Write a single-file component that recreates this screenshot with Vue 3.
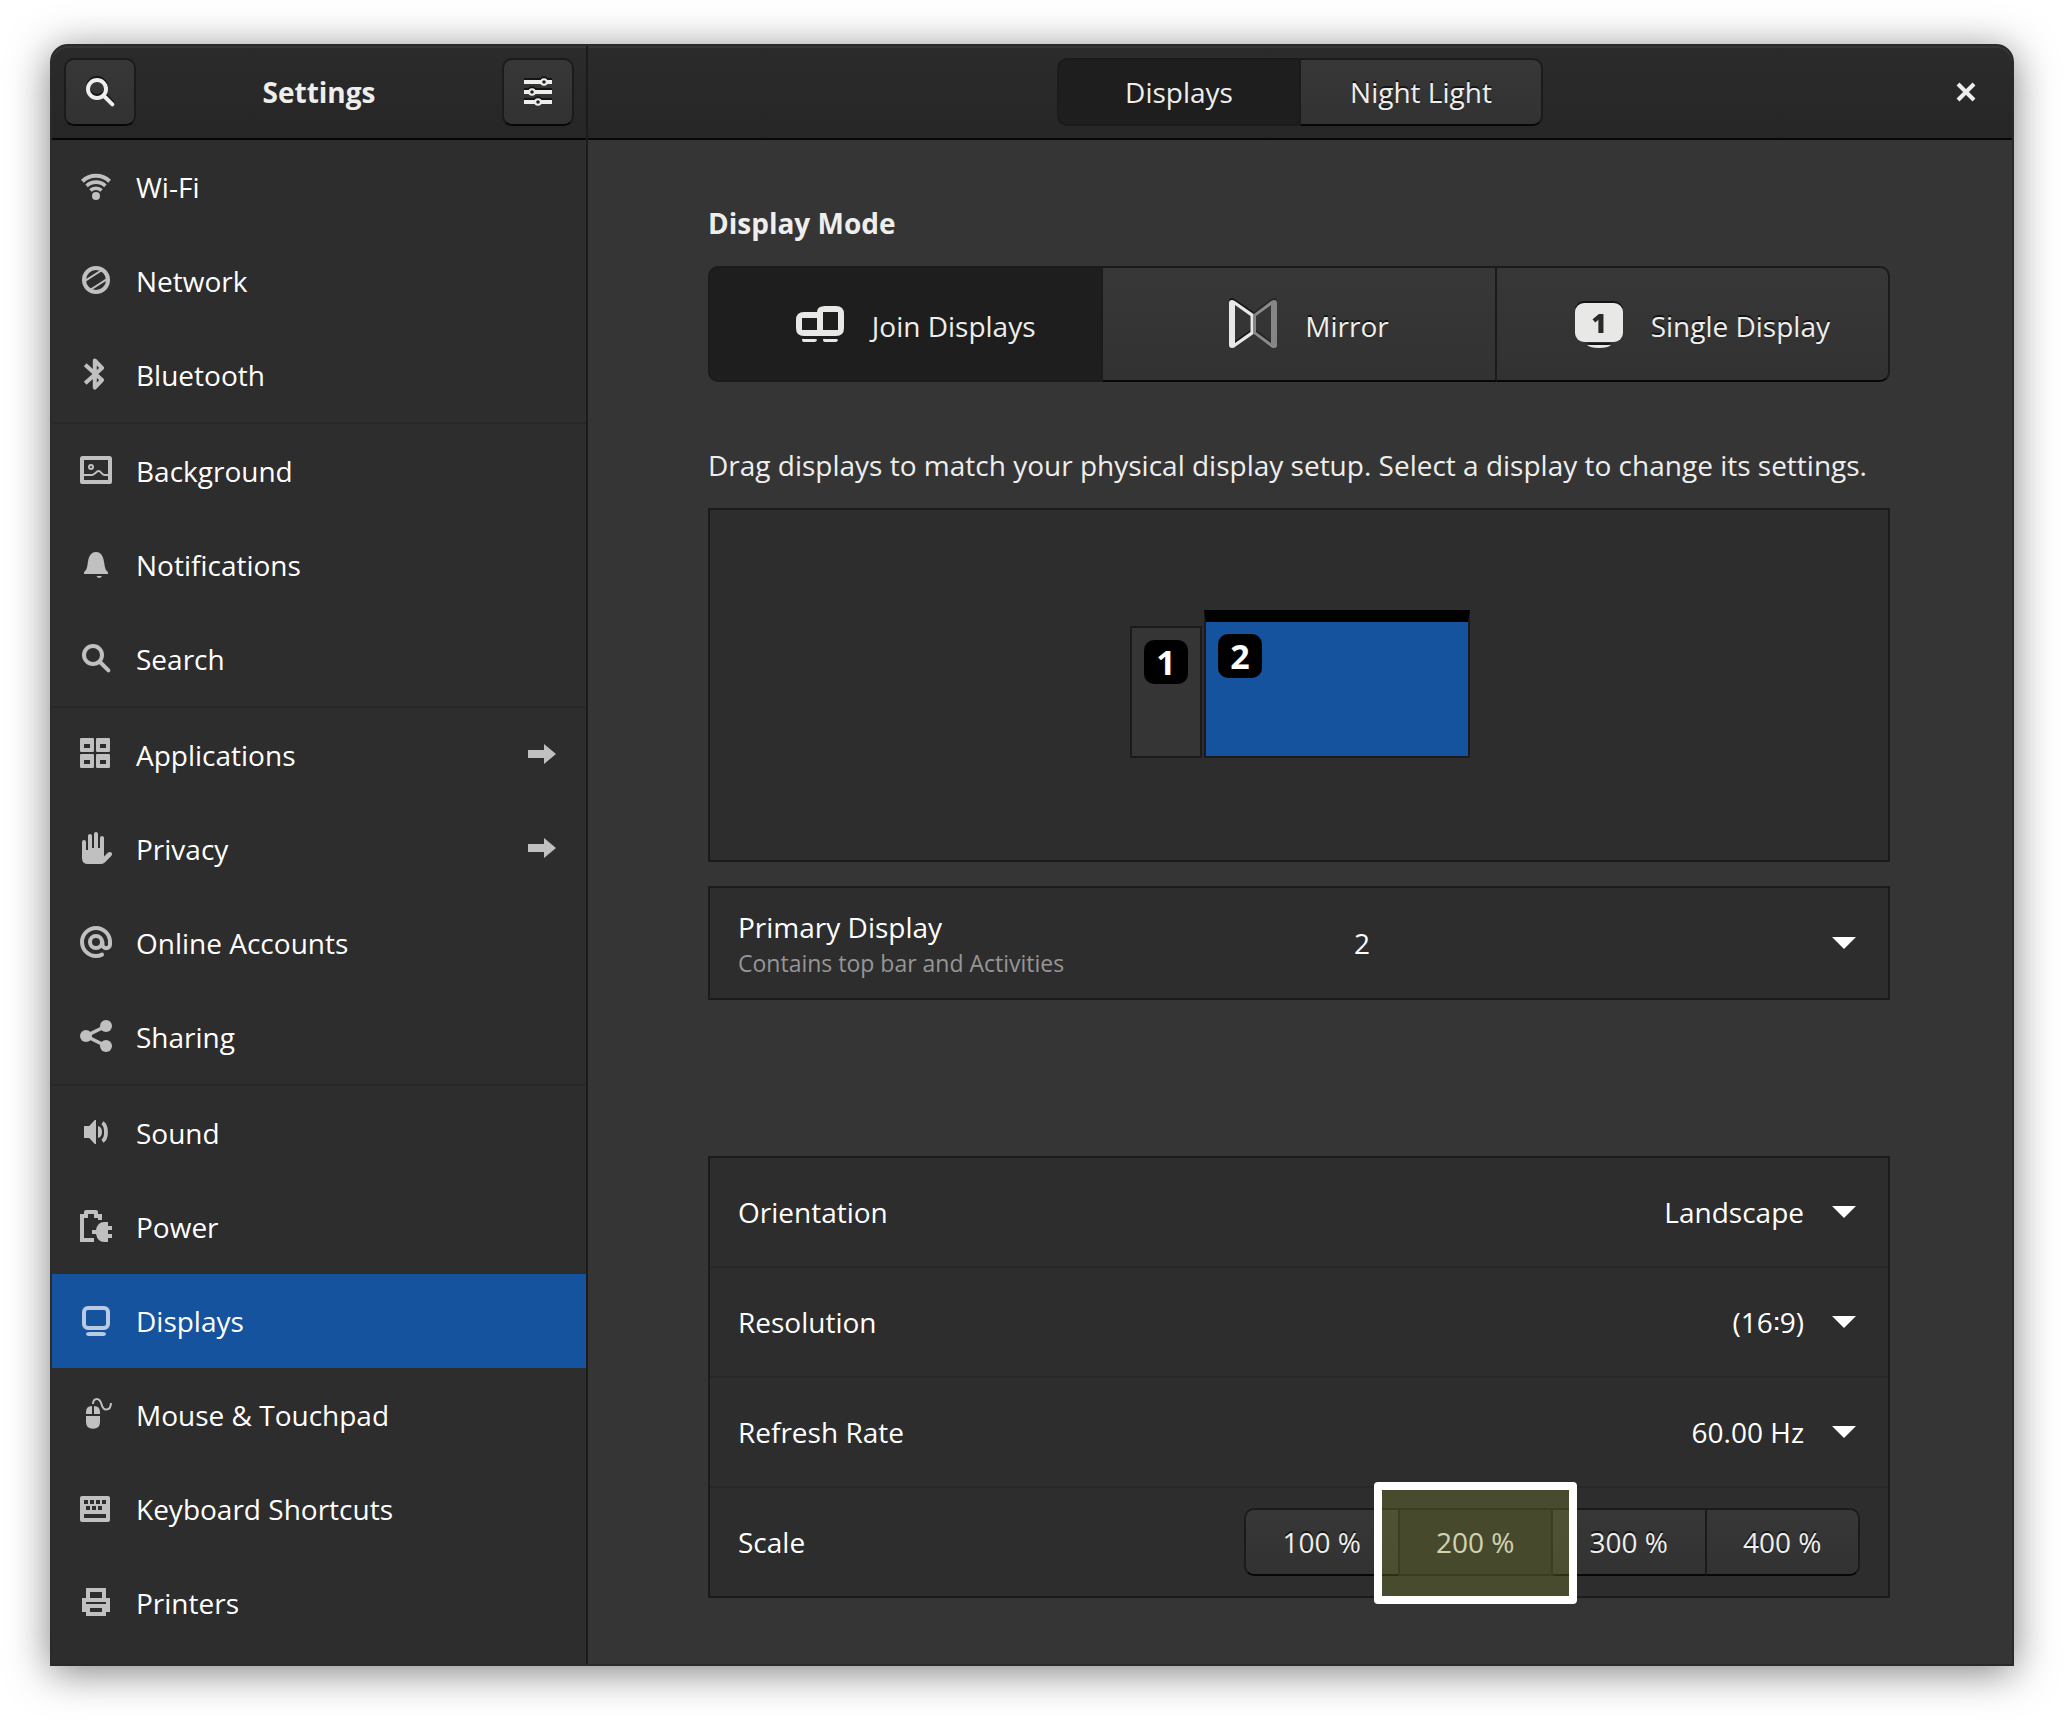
<script setup>
import { ref } from 'vue'

const groups = [
  [
    { id: 'wifi', label: 'Wi-Fi' },
    { id: 'network', label: 'Network' },
    { id: 'bluetooth', label: 'Bluetooth' },
  ],
  [
    { id: 'background', label: 'Background' },
    { id: 'notifications', label: 'Notifications' },
    { id: 'search', label: 'Search' },
  ],
  [
    { id: 'applications', label: 'Applications', sub: true },
    { id: 'privacy', label: 'Privacy', sub: true },
    { id: 'online', label: 'Online Accounts' },
    { id: 'sharing', label: 'Sharing' },
  ],
  [
    { id: 'sound', label: 'Sound' },
    { id: 'power', label: 'Power' },
    { id: 'displays', label: 'Displays' },
    { id: 'mouse', label: 'Mouse & Touchpad' },
    { id: 'keyboard', label: 'Keyboard Shortcuts' },
    { id: 'printers', label: 'Printers' },
  ],
]

const icons = {
  wifi: '<g fill="none" stroke="currentColor"><path stroke-width="2" d="M1.2 5.6A10 10 0 0 1 14.8 5.6"/><path stroke-width="1.8" d="M3.3 7.9A7 7 0 0 1 12.7 7.9"/><path stroke-width="1.8" d="M5.2 10.2A4.2 4.2 0 0 1 10.8 10.2"/></g><circle cx="8" cy="13" r="2"/>',
  network: '<g fill="none" stroke="currentColor"><circle cx="8" cy="8" r="6" stroke-width="2"/><path d="M2.5 8.4L11 3M5 13L13.5 7.6"/></g>',
  bluetooth: '<path fill="none" stroke="currentColor" stroke-width="2" stroke-linejoin="round" d="M2.600 3.400L11 11L7.400 14.800V1.200L11 5L2.600 12.600"/>',
  background: '<rect x="1" y="2" width="14" height="12" rx=".3" fill="none" stroke="currentColor" stroke-width="2"/><g fill="none" stroke="currentColor"><circle cx="5.5" cy="6.5" r="1"/><path d="M2 10.5H6C7.5 10.5 8 8.5 9.3 8.5S10.8 10.5 12.5 10.5H14"/></g>',
  notifications: '<path d="M8 2C5 2 4.2 5 3.8 8C3.5 10.4 3 11.3 2 12V13H14V12C13 11.3 12.5 10.4 12.2 8C11.8 5 11 2 8 2ZM8.2 14H11Q10.4 15 9.6 15T8.2 14Z"/>',
  search: '<circle cx="6.5" cy="6.5" r="4.5" fill="none" stroke="currentColor" stroke-width="2"/><path d="M10 10L14.2 14.2" stroke="currentColor" stroke-width="2" stroke-linecap="round"/>',
  applications: '<path fill-rule="evenodd" d="M.6 0H6.4Q7 0 7 .6V6.4Q7 7 6.4 7H.6Q0 7 0 6.4V.6Q0 0 .6 0ZM2 3V5H5V3ZM8.6 0H14.4Q15 0 15 .6V6.4Q15 7 14.4 7H8.6Q8 7 8 6.4V.6Q8 0 8.6 0ZM10 3V5H13V3ZM.6 8H6.4Q7 8 7 8.6V14.4Q7 15 6.4 15H.6Q0 15 0 14.4V8.6Q0 8 .6 8ZM2 11V13H5V11ZM8.6 8H14.4Q15 8 15 8.6V14.4Q15 15 14.4 15H8.6Q8 15 8 14.4V8.6Q8 8 8.6 8ZM10 11V13H13V11Z"/>',
  privacy: '<path d="M1 5Q1 4 2 4T3 5V9H4V2Q4 1 5 1T6 2V8H7V1Q7 0 8 0T9 1V8H10V3Q10 2 11 2T12 3V12.2L14 10.3Q15 9.6 15.7 10.3T15.6 12L12.4 15.2Q11.4 16 10.4 16H4Q1 16 1 13Z"/>',
  online: '<g fill="none" stroke="currentColor" stroke-width="2"><circle cx="8" cy="8" r="3"/><path stroke-linecap="round" d="M11 14.3Q9.6 15 8 15A7 7 0 1 1 15 8V9.2A1.9 1.9 0 0 1 11.2 9.2V8"/></g>',
  sharing: '<circle cx="13" cy="3" r="3"/><circle cx="3" cy="8" r="3"/><circle cx="13" cy="13" r="3"/><path d="M13 3L3 8L13 13" fill="none" stroke="currentColor" stroke-width="1.8"/>',
  sound: '<path d="M2 5H4.6L7.4 2H8V14H7.4L4.6 11H2ZM9 5Q11 5.5 11 8T9 11Z"/><path d="M11.2 3.4Q13 4.5 13 8T11.2 12.6" fill="none" stroke="currentColor" stroke-width="1.9"/>',
  power: '<path d="M0 2H2V1Q2 0 3 0H8Q9 0 9 1V2H11V5H9V4H7V2H4V4H2V14H7V16H0ZM6 10H8Q8.8 6 12 6H14V8H16V10H14V12H16V14H14V16H12Q8.8 16 8 12H6Z"/>',
  displays: '<rect x="2" y="2" width="12" height="10" rx="2" fill="none" stroke="currentColor" stroke-width="2"/><path d="M5 14H11Q13 14 13 15T11 16H5Q3 16 3 15T5 14Z"/>',
  mouse: '<path d="M3 8V7Q3 4 6 4V8ZM7 4Q10 4 10 7V8H7ZM3 9H10V12Q10 15.4 6.5 15.4T3 12Z"/><path d="M6.5 3Q6.5 .5 8.5 .5C11.5 .5 10 5.8 13 5.8Q15.4 5.8 15.5 2.5" fill="none" stroke="currentColor"/>',
  keyboard: '<path fill-rule="evenodd" d="M1 2H14Q15 2 15 3V14Q15 15 14 15H1Q0 15 0 14V3Q0 2 1 2ZM2 4V6H4V4ZM5 4V6H7V4ZM8 4V6H10V4ZM11 4V6H13V4ZM3 7V9H5V7ZM6 7V9H8V7ZM9 7V9H11V7ZM2 11V13H13V11Z"/>',
  printers: '<path fill-rule="evenodd" d="M3 1H13V6H15V13H13V15H3V13H1V6H3ZM5 3V6H11V3ZM3 8V9H13V8ZM5 11V13H11V11Z"/>',
}

const active = ref('displays')
const tabs = ['Displays', 'Night Light']
const tab = ref('Displays')
const mode = ref('join')

const primary = ref('2')
const settings = ref([
  { id: 'orientation', label: 'Orientation', value: 'Landscape' },
  { id: 'resolution', label: 'Resolution', value: '(16∶9)' },
  { id: 'refresh', label: 'Refresh Rate', value: '60.00 Hz' },
])

const scales = ['100 %', '200 %', '300 %', '400 %']
const scale = ref('200 %')
</script>

<template>
  <div class="desktop">
    <div class="window">
      <aside class="side">
        <header class="bar side-bar">
          <button class="btn icon-btn" aria-label="Search">
            <svg class="icon" viewBox="0 0 16 16" v-html="icons.search"></svg>
          </button>
          <h1 class="heading">Settings</h1>
          <button class="btn icon-btn" aria-label="Menu">
            <svg class="icon" viewBox="0 0 16 16">
              <path d="M1 2H15V4H1ZM1 7H15V9H1ZM1 12H15V14H1Z" />
              <g class="knob">
                <circle cx="11" cy="3" r="1.4" />
                <circle cx="5" cy="8" r="1.4" />
                <circle cx="8" cy="13" r="1.4" />
              </g>
            </svg>
          </button>
        </header>
        <nav class="nav">
          <ul v-for="(group, i) in groups" :key="i" class="group">
            <li v-for="item in group" :key="item.id">
              <a
                href="#"
                class="item"
                :class="{ selected: item.id === active }"
                @click.prevent="active = item.id"
              >
                <svg class="icon" viewBox="0 0 16 16" v-html="icons[item.id]"></svg>
                <span class="item-label">{{ item.label }}</span>
                <svg v-if="item.sub" class="arrow" viewBox="0 0 28 20">
                  <path d="M0 6H16V0L28 10L16 20V14H0Z" />
                </svg>
              </a>
            </li>
          </ul>
        </nav>
      </aside>

      <main class="main">
        <header class="bar main-bar">
          <div class="linked tabs">
            <button
              v-for="t in tabs"
              :key="t"
              class="btn"
              :class="{ checked: t === tab }"
              :aria-pressed="t === tab"
              @click="tab = t"
            >{{ t }}</button>
          </div>
          <button class="close" aria-label="Close">
            <svg viewBox="0 0 20 20"><path d="M2 2L18 18M18 2L2 18" /></svg>
          </button>
        </header>

        <div class="content">
          <h2 class="heading mode-title">Display Mode</h2>
          <div class="linked modes">
            <button class="btn" :class="{ checked: mode === 'join' }" @click="mode = 'join'">
              <svg class="mode-icon" viewBox="0 0 48 48">
                <path fill-rule="evenodd" d="M8 12H21Q21 6 29 6H40Q48 6 48 14V28Q48 36 40 36H8Q0 36 0 28V20Q0 12 8 12ZM6 18V30H21V18ZM27 12V30H42V12Z" />
                <path d="M8 39H19Q21 39 21 40T19 42H8Q6 42 6 40T8 39ZM29 39H40Q42 39 42 40T40 42H29Q27 42 27 40T29 39Z" />
              </svg>
              <span>Join Displays</span>
            </button>
            <button class="btn" :class="{ checked: mode === 'mirror' }" @click="mode = 'mirror'">
              <svg class="mode-icon" viewBox="0 0 48 48">
                <path fill-rule="evenodd" opacity=".5" d="M48 3V45Q48 48 45 48Q43 48 41.500 46.500L25 34V14L41.500 1.500Q43 0 45 0Q48 0 48 3ZM42 5L27 16V32L42 43Z" />
                <path fill-rule="evenodd" d="M0 3V45Q0 48 3 48Q5 48 6.500 46.500L24.500 34V14L6.500 1.500Q5 0 3 0Q0 0 0 3ZM6 5L21.500 16V32L6 43Z" />
              </svg>
              <span>Mirror</span>
            </button>
            <button class="btn" :class="{ checked: mode === 'single' }" @click="mode = 'single'">
              <svg class="mode-icon" viewBox="0 0 48 48">
                <rect x="0" y="3" width="48" height="39" rx="9" />
                <path d="M12 45H36Q33 48 24 48T12 45Z" />
                <text class="digit" x="24" y="33" text-anchor="middle">1</text>
              </svg>
              <span>Single Display</span>
            </button>
          </div>

          <p class="hint">Drag displays to match your physical display setup. Select a display to change its settings.</p>

          <div class="arrangement">
            <div class="screen first"><span class="badge">1</span></div>
            <div class="screen second"><span class="badge">2</span></div>
          </div>

          <div class="card primary">
            <label for="primary" class="label">
              <span>Primary Display</span>
              <small>Contains top bar and Activities</small>
            </label>
            <div class="combo wide">
              <select id="primary" v-model="primary">
                <option>1</option>
                <option>2</option>
              </select>
              <svg class="caret" viewBox="0 0 24 12"><path d="M0 0H24L12 12Z" /></svg>
            </div>
          </div>

          <div class="card list">
            <div v-for="s in settings" :key="s.id" class="row">
              <label :for="s.id" class="label">{{ s.label }}</label>
              <div class="combo">
                <select :id="s.id" v-model="s.value">
                  <option>{{ s.value }}</option>
                </select>
                <svg class="caret" viewBox="0 0 24 12"><path d="M0 0H24L12 12Z" /></svg>
              </div>
            </div>
            <div class="row">
              <span id="scale-label" class="label">Scale</span>
              <div class="linked scales" role="group" aria-labelledby="scale-label">
                <button
                  v-for="s in scales"
                  :key="s"
                  class="btn"
                  :class="{ checked: s === scale }"
                  :aria-pressed="s === scale"
                  @click="scale = s"
                >
                  {{ s }}
                  <span v-if="s === scale" class="marker"></span>
                </button>
              </div>
            </div>
          </div>
        </div>
      </main>
    </div>
  </div>
</template>

<style>
body {
  margin: 0;
  background: #fff;
}
</style>

<style scoped>
.desktop {
  padding: 44px 50px 56px;
  font: 28px/38px "Open Sans", "Noto Sans", sans-serif;
  color: #eeeeec;
}
.desktop *,
.desktop *::before {
  box-sizing: border-box;
}
.window {
  display: flex;
  border: 2px solid #2a2a2a;
  border-radius: 18px 18px 0 0;
  background: #353535;
  box-shadow: 0 6px 40px rgba(0, 0, 0, 0.5);
}
.side {
  flex: none;
  width: 536px;
  border-right: 2px solid #1b1b1b;
  border-radius: 16px 0 0 0;
  background: #2d2d2d;
}
.main {
  flex: 1;
  min-width: 0;
}
.bar {
  height: 94px;
  padding: 0 12px;
  border-bottom: 2px solid #070707;
  background: linear-gradient(#2b2b2b, #262626);
  box-shadow: inset 0 2px #363636;
}
.side-bar {
  display: flex;
  align-items: center;
  justify-content: space-between;
  border-radius: 16px 0 0 0;
}
.main-bar {
  display: grid;
  grid-template-columns: 1fr auto 1fr;
  align-items: center;
  border-radius: 0 16px 0 0;
}
.heading {
  margin: 0;
  font-size: 28px;
  line-height: 38px;
  font-weight: 700;
}
.btn {
  height: 68px;
  padding: 0;
  border: 2px solid #1b1b1b;
  border-bottom-color: #070707;
  background: linear-gradient(#373737, #323232);
  color: #eeeeec;
  font: inherit;
  text-shadow: 0 -2px #141414;
}
.btn.checked {
  border-color: #1b1b1b;
  background: #1e1e1e;
  text-shadow: none;
}
.btn svg {
  filter: drop-shadow(0 -2px #141414);
}
.btn.checked svg {
  filter: none;
}
.icon-btn {
  display: grid;
  place-items: center;
  width: 72px;
  border-radius: 10px;
}
.icon {
  flex: none;
  width: 32px;
  height: 32px;
  fill: currentColor;
}
.knob {
  fill: #222;
  stroke: currentColor;
}
.linked {
  display: flex;
}
.linked .btn {
  position: relative;
  flex: 1;
  border-left-width: 0;
}
.linked .btn:first-child {
  border-left-width: 2px;
  border-radius: 10px 0 0 10px;
}
.linked .btn:last-child {
  border-radius: 0 10px 10px 0;
}
.tabs {
  grid-column: 2;
  width: 486px;
}
.close {
  justify-self: end;
  display: grid;
  place-items: center;
  width: 68px;
  height: 68px;
  padding: 0;
  border: 0;
  background: none;
}
.close svg {
  width: 20px;
  height: 20px;
  fill: none;
  stroke: #eeeeec;
  stroke-width: 4;
}
.nav {
  padding-bottom: 14px;
}
.group {
  margin: 0;
  padding: 0;
  list-style: none;
}
.group + .group {
  border-top: 2px solid #282828;
}
.item {
  display: flex;
  align-items: center;
  gap: 24px;
  height: 94px;
  padding: 0 30px 2px 28px;
  color: #fff;
  text-decoration: none;
}
.item .icon,
.arrow {
  color: #c0c0c0;
}
.item-label {
  flex: 1;
  padding-top: 2px;
}
.item.selected {
  background: #15539e;
}
.item.selected .icon {
  color: #b9cbe2;
}
.arrow {
  width: 28px;
  height: 20px;
  fill: currentColor;
}
.content {
  padding: 64px 122px 66px 120px;
}
.mode-title {
  margin-bottom: 24px;
}
.modes .btn {
  display: flex;
  align-items: center;
  justify-content: center;
  gap: 28px;
  height: 116px;
  padding-left: 20px;
}
.modes span {
  padding-top: 4px;
}
.mode-icon {
  width: 48px;
  height: 48px;
  fill: #e8e8e6;
}
.digit {
  fill: #2a2a2a;
  font: 800 26px "Open Sans", "Noto Sans", sans-serif;
  text-shadow: none;
}
.hint {
  margin: 64px 0 24px;
}
.arrangement {
  display: flex;
  align-items: flex-end;
  justify-content: center;
  gap: 2px;
  height: 354px;
  padding: 0 0 102px 2px;
  border: 2px solid #1b1b1b;
  background: #2d2d2d;
}
.screen {
  padding: 12px;
  border: 2px solid #1b1b1b;
}
.first {
  width: 72px;
  height: 132px;
  background: #353535;
}
.second {
  width: 266px;
  height: 148px;
  border-top: 12px solid #000;
  background: #15539e;
}
.badge {
  display: block;
  width: 44px;
  border-radius: 10px;
  background: #000;
  color: #fff;
  font-size: 34px;
  line-height: 44px;
  font-weight: 700;
  text-align: center;
}
.card {
  border: 2px solid #1b1b1b;
  background: #2d2d2d;
  color: #fff;
}
.primary {
  display: flex;
  align-items: center;
  height: 114px;
  margin-top: 24px;
  padding: 0 28px;
}
.label {
  flex: 1;
}
.primary .label {
  padding-top: 2px;
}
.label span {
  display: block;
}
.label small {
  display: block;
  color: #969696;
  font-size: 23px;
  line-height: 34px;
}
.list {
  margin-top: 156px;
}
.row {
  display: flex;
  align-items: center;
  height: 108px;
  padding: 0 28px;
}
.row + .row {
  height: 110px;
  border-top: 2px solid #282828;
}
.combo {
  display: grid;
  align-items: center;
  width: 240px;
  margin-right: 4px;
}
.combo.wide {
  width: 502px;
}
.combo select,
.combo .caret {
  grid-area: 1 / 1;
}
select {
  width: 100%;
  height: 68px;
  padding: 0 52px 0 0;
  border: 0;
  background: none;
  color: #fff;
  font: inherit;
  text-align: right;
  text-align-last: right;
  appearance: none;
}
.wide select {
  text-align: left;
  text-align-last: left;
}
.caret {
  justify-self: end;
  width: 24px;
  height: 12px;
  fill: #fff;
  pointer-events: none;
}
.scales {
  width: 616px;
}
.scales .checked {
  background: #2a2a2a;
}
.marker {
  position: absolute;
  z-index: 1;
  inset: -28px -26px -30px;
  border: 8px solid #fff;
  border-radius: 4px;
  background: rgba(135, 145, 48, 0.3);
}
</style>
